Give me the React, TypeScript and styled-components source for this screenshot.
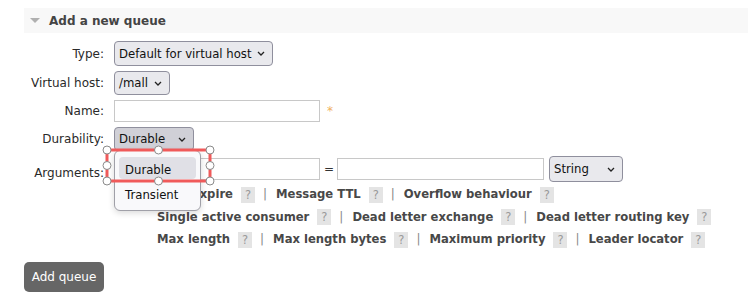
import styled, { createGlobalStyle } from "styled-components";

const GlobalStyle = createGlobalStyle`
  body {
    margin: 0;
    background: #ffffff;
    font-family: "DejaVu Sans", Verdana, sans-serif;
    font-size: 12px;
    color: #333333;
  }
`;

const Page = styled.div`
  padding: 8px 0 0 24px;
`;

const Header = styled.div`
  display: flex;
  align-items: center;
  height: 25px;
  padding-left: 6px;
  background: #f8f8f8;
`;

const Arrow = styled.span`
  width: 0;
  height: 0;
  border-left: 5px solid transparent;
  border-right: 5px solid transparent;
  border-top: 5px solid #b0b0b0;
  margin-right: 9px;
`;

const Title = styled.h2`
  margin: 0;
  font-size: 12px;
  font-weight: bold;
  color: #444444;
`;

const Form = styled.div`
  display: grid;
  grid-template-columns: 80px auto;
  column-gap: 10px;
  row-gap: 5px;
  align-items: center;
  margin-top: 8px;
`;

const Label = styled.label<{ $drop?: number }>`
  text-align: right;
  color: #2a2a2a;
  padding-top: ${(p) => p.$drop ?? 0}px;
`;

const Cell = styled.div`
  display: flex;
  align-items: center;
  position: relative;
`;

const SelectBox = styled.div<{ $w: number; $h?: number; $open?: boolean }>`
  display: inline-flex;
  align-items: center;
  justify-content: space-between;
  box-sizing: border-box;
  width: ${(p) => p.$w}px;
  height: ${(p) => p.$h ?? 25}px;
  padding: 0 7px 0 4px;
  border: 1px solid #8f8f9d;
  border-radius: 4px;
  background: ${(p) => (p.$open ? "#d0d0d7" : "#e9e9ed")};
  font-size: 11.7px;
  color: #111111;
`;

const TextInput = styled.div<{ $w: number }>`
  box-sizing: border-box;
  width: ${(p) => p.$w}px;
  height: 22px;
  border: 1px solid #c8c8c8;
  background: #ffffff;
`;

const Required = styled.span`
  margin-left: 7px;
  color: #f0b060;
  font-size: 12px;
`;

const Equals = styled.span`
  margin: 0 3px 0 4px;
  color: #333333;
`;

const Gap = styled.span`
  width: 5px;
`;

const Popup = styled.div`
  position: absolute;
  left: 0;
  top: 23px;
  z-index: 2;
  box-sizing: border-box;
  width: 87px;
  height: 61px;
  padding: 6px 4px 0;
  border: 1px solid #a0a0a8;
  border-radius: 6px;
  background: #f9f9fb;
  box-shadow: 0 2px 6px rgba(0, 0, 0, 0.15);
  font-size: 11.7px;
  color: #111111;
`;

const Option = styled.div<{ $active?: boolean }>`
  height: 22px;
  line-height: 26px;
  padding-left: 6px;
  border-radius: 4px;
  background: ${(p) => (p.$active ? "#e0e0e6" : "transparent")};
  margin-bottom: 3px;
`;

const Marker = styled.svg`
  position: absolute;
  left: -12px;
  top: 18px;
  z-index: 3;
  overflow: visible;
`;

const Links = styled.div`
  padding-left: 133px;
  margin-top: 1px;
  line-height: 22.5px;
`;

const Line = styled.div`
  white-space: nowrap;
`;

const Arg = styled.span`
  font-weight: bold;
  font-size: 11.6px;
  color: #484848;
`;

const Help = styled.span`
  display: inline-block;
  width: 14px;
  height: 16px;
  line-height: 16px;
  margin: 0 8px 0 8px;
  background: #e4e4e4;
  color: #999999;
  text-align: center;
  vertical-align: middle;
  font-size: 11.5px;
`;

const Sep = styled.span`
  margin-right: 9px;
  color: #888888;
`;

const Button = styled.button`
  margin-top: 11px;
  width: 80px;
  height: 30px;
  border: none;
  border-radius: 5px;
  background: #666666;
  color: #ffffff;
  font-family: "DejaVu Sans", Verdana, sans-serif;
  font-size: 12px;
  padding: 0;
`;

function Chevron() {
  return (
    <svg width="8" height="5" viewBox="0 0 8 5">
      <path d="M1 1 L4 4 L7 1" fill="none" stroke="#222" strokeWidth="1.3" />
    </svg>
  );
}

function Select({ w, h, open, children }: { w: number; h?: number; open?: boolean; children: string }) {
  return (
    <SelectBox $w={w} $h={h} $open={open}>
      <span>{children}</span>
      <Chevron />
    </SelectBox>
  );
}

const handles: [number, number][] = [
  [5, 5], [56.5, 5], [108, 5],
  [5, 20.5], [108, 20.5],
  [5, 36], [56.5, 36], [108, 36],
];

function SelectionMarker() {
  return (
    <Marker width="113" height="41" viewBox="0 0 113 41">
      <rect x="5" y="5" width="103" height="31" fill="none" stroke="#f05a5a" strokeWidth="3" />
      {handles.map(([cx, cy], i) => (
        <circle key={i} cx={cx} cy={cy} r="4" fill="#ffffff" stroke="#8a8a8a" strokeWidth="1" />
      ))}
    </Marker>
  );
}

const argLines: string[][] = [
  ["Auto expire", "Message TTL", "Overflow behaviour"],
  ["Single active consumer", "Dead letter exchange", "Dead letter routing key"],
  ["Max length", "Max length bytes", "Maximum priority", "Leader locator"],
];

export default function App() {
  return (
    <>
      <GlobalStyle />
      <Page>
        <Header>
          <Arrow />
          <Title>Add a new queue</Title>
        </Header>
        <Form>
          <Label>Type:</Label>
          <Cell>
            <Select w={159}>Default for virtual host</Select>
          </Cell>
          <Label>Virtual host:</Label>
          <Cell>
            <Select w={56} h={24}>/mall</Select>
          </Cell>
          <Label>Name:</Label>
          <Cell>
            <TextInput $w={206} />
            <Required>*</Required>
          </Cell>
          <Label>Durability:</Label>
          <Cell>
            <Select w={80} h={24} open>Durable</Select>
            <Popup>
              <Option $active>Durable</Option>
              <Option>Transient</Option>
            </Popup>
            <SelectionMarker />
          </Cell>
          <Label $drop={8}>Arguments:</Label>
          <Cell>
            <TextInput $w={206} />
            <Equals>=</Equals>
            <TextInput $w={207} />
            <Gap />
            <Select w={74} h={26}>String</Select>
          </Cell>
        </Form>
        <Links>
          {argLines.map((line, i) => (
            <Line key={i}>
              {line.map((name, j) => (
                <span key={name}>
                  <Arg>{name}</Arg>
                  <Help>?</Help>
                  {j < line.length - 1 && <Sep>|</Sep>}
                </span>
              ))}
            </Line>
          ))}
        </Links>
        <Button>Add queue</Button>
      </Page>
    </>
  );
}
